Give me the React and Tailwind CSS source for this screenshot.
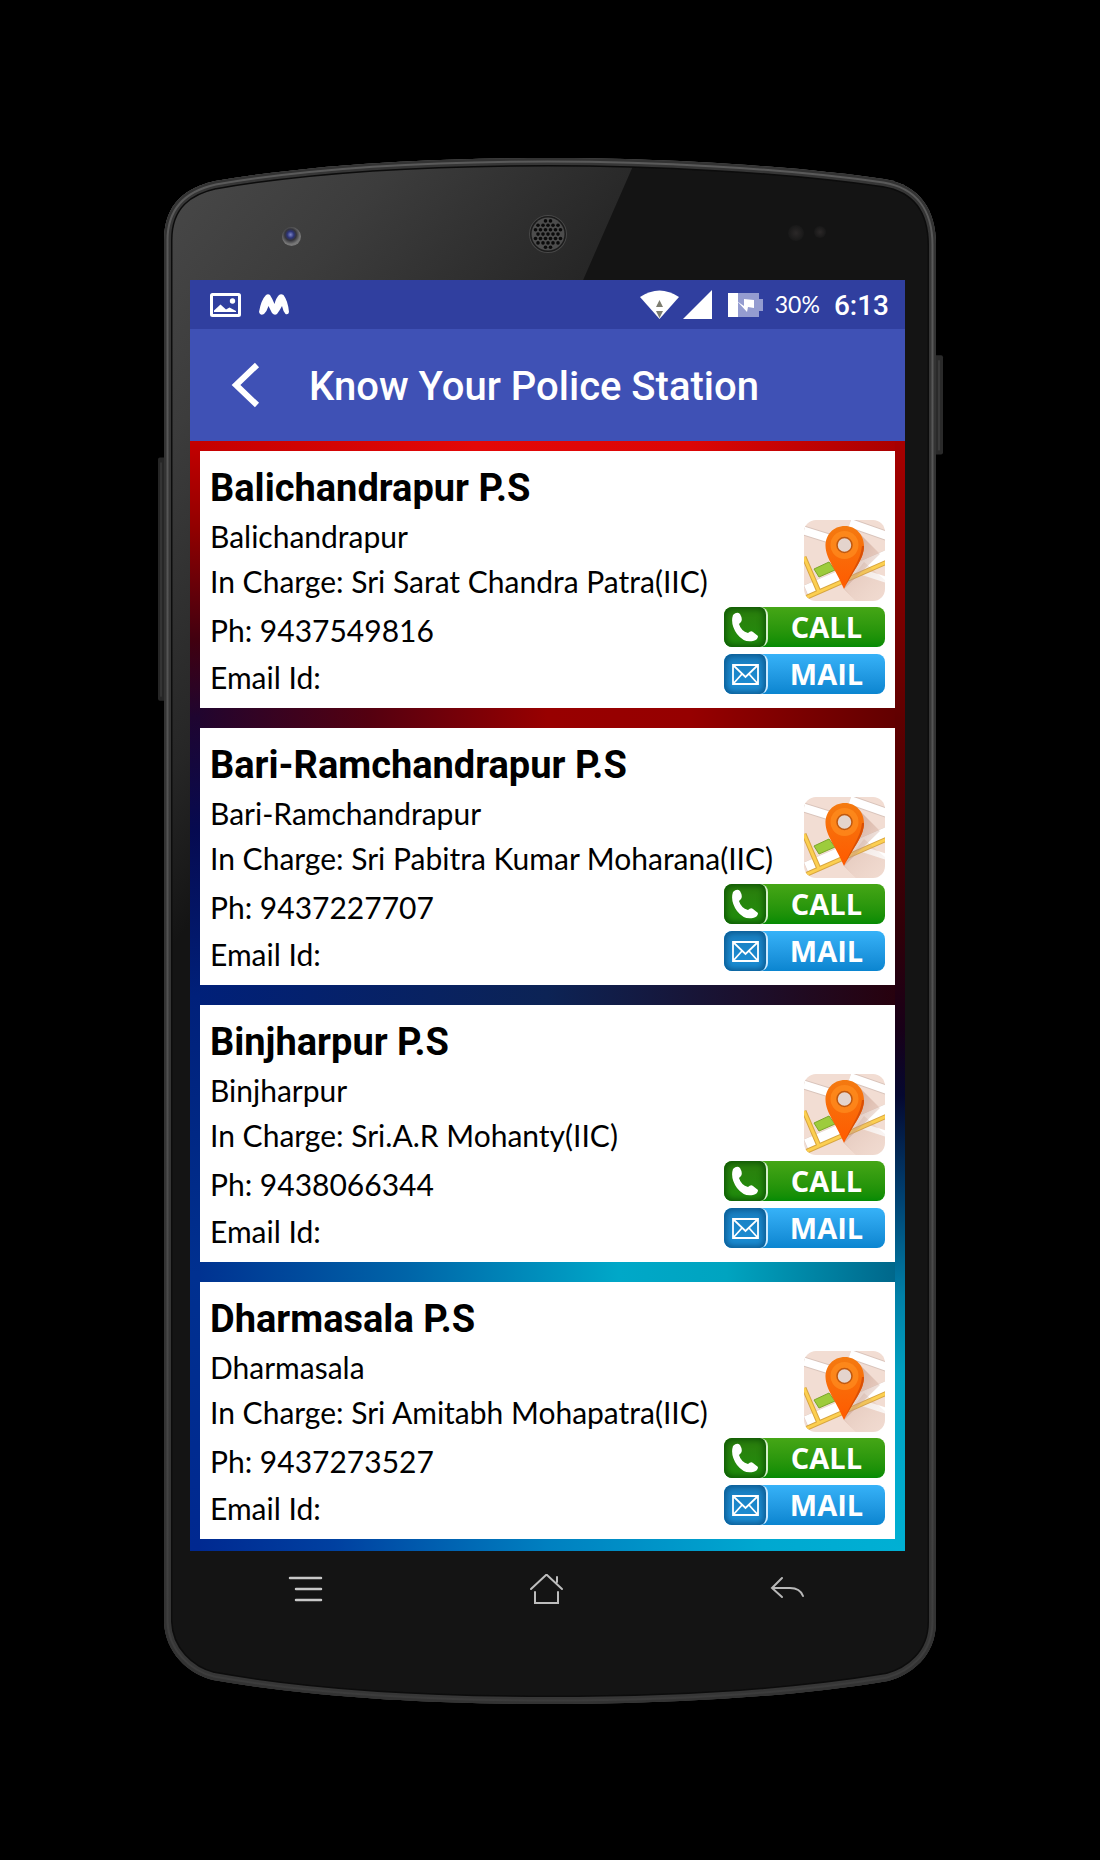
import React from "react";

const stations = [
  { name: "Balichandrapur P.S", place: "Balichandrapur", officer: "Sri Sarat Chandra Patra(IIC)", phone: "9437549816" },
  { name: "Bari-Ramchandrapur P.S", place: "Bari-Ramchandrapur", officer: "Sri Pabitra Kumar Moharana(IIC)", phone: "9437227707" },
  { name: "Binjharpur P.S", place: "Binjharpur", officer: "Sri.A.R Mohanty(IIC)", phone: "9438066344" },
  { name: "Dharmasala P.S", place: "Dharmasala", officer: "Sri Amitabh Mohapatra(IIC)", phone: "9437273527" },
];

const BODY =
  "M164 240C164 202 188 187 215 181C320 163 450 158 548 158C650 158 780 164 884 179C920 185 936 210 936 245V1620C936 1655 910 1673 888 1679C780 1697 650 1702 549 1702C450 1702 320 1697 213 1678C188 1672 165 1650 164 1620Z";

const holes = [];
for (let r = -3; r <= 3; r++) {
  for (let c = -3; c <= 3; c++) {
    const x = c * 5 + (r % 2 ? 2.5 : 0);
    const y = r * 4.4;
    if (x * x + y * y < 190) holes.push([x, y]);
  }
}

function PhoneBody() {
  return (
    <svg className="absolute inset-0 h-full w-full" viewBox="156 157 788 1546" preserveAspectRatio="none" aria-hidden="true">
      <defs>
        <clipPath id="body"><path d={BODY} /></clipPath>
        <linearGradient id="glare" gradientUnits="userSpaceOnUse" x1="200" y1="180" x2="560" y2="480">
          <stop offset="0" stopColor="#464646" />
          <stop offset="0.3" stopColor="#3c3c3c" />
          <stop offset="0.76" stopColor="#262626" />
          <stop offset="1" stopColor="#141414" />
        </linearGradient>
        <linearGradient id="rim" x1="0" y1="0" x2="0" y2="1">
          <stop offset="0" stopColor="#5a5a5a" />
          <stop offset="0.6" stopColor="#505050" />
          <stop offset="1" stopColor="#3c3c3c" />
        </linearGradient>
        <radialGradient id="lens" cx="0.45" cy="0.4">
          <stop offset="0" stopColor="#7d86c8" />
          <stop offset="0.35" stopColor="#2c3378" />
          <stop offset="0.6" stopColor="#34343a" />
          <stop offset="1" stopColor="#777" />
        </radialGradient>
        <radialGradient id="sensor">
          <stop offset="0" stopColor="#2b2828" />
          <stop offset="1" stopColor="#181818" />
        </radialGradient>
      </defs>
      <rect x="158" y="457" width="10" height="243" rx="2" fill="#262626" />
      <rect x="160" y="462" width="2" height="234" fill="#343434" />
      <rect x="932" y="355" width="11" height="99" rx="2" fill="#2a2a2a" />
      <rect x="938" y="360" width="2" height="90" fill="#3a3a3a" />
      <path d={BODY} fill="#141414" />
      <g clipPath="url(#body)">
        <path d="M156 150H640L583 280L190 1180L156 1240Z" fill="url(#glare)" />
        <path d={BODY} fill="none" stroke="#0c0c0c" strokeWidth="17" />
        <path d={BODY} fill="none" stroke="#363636" strokeWidth="14" />
        <path d={BODY} fill="none" stroke="url(#rim)" strokeWidth="9" />
        <path d={BODY} fill="none" stroke="#333" strokeWidth="5" />
      </g>
      <circle cx="291.500" cy="236.500" r="9.500" fill="url(#lens)" />
      <circle cx="548" cy="234" r="18.500" fill="#1b1b1b" stroke="#484848" strokeWidth="1" />
      <circle cx="548" cy="234" r="16.500" fill="#4c4c4c" />
      {holes.map(([x, y]) => (
        <circle key={x + "," + y} cx={548 + x} cy={234 + y} r="1.800" fill="#0a0a0a" />
      ))}
      <circle cx="796" cy="233" r="8" fill="url(#sensor)" />
      <circle cx="820" cy="232" r="6" fill="url(#sensor)" />
    </svg>
  );
}

function StatusBar() {
  return (
    <div className="flex h-[49px] items-center justify-between bg-[#303f9f] pr-4 pl-5 text-white">
      <div className="flex items-center gap-[18px]">
        <svg width="31" height="24" viewBox="0 0 31 24" aria-label="Picture notification">
          <rect x="1.500" y="1.500" width="28" height="21" rx="1" fill="none" stroke="#fff" strokeWidth="3" />
          <path d="M4 19V17.500L10.500 11.500L16 16.500L19.500 14.500L26 18V19Z" fill="#fff" />
          <circle cx="22.500" cy="8" r="2.700" fill="#fff" />
        </svg>
        <svg width="30" height="21" viewBox="0 0 30 21" aria-label="App notification">
          <path d="M0 18Q2 6 7 1Q9 -0.500 11 1Q13 4 15.500 10Q17 4 20 1Q22 -0.500 24.500 1Q29 7 30 18Q29.500 21 26.500 20Q24 17 23 12Q21 16 18 20Q15.500 22 13 19L9.500 12Q8 17 5 20Q1 22 0 18Z" fill="#fff" />
        </svg>
      </div>
      <div className="flex items-center">
        <svg width="39" height="29" viewBox="0 0 39 29" aria-label="Wi-Fi">
          <path d="M0 7Q19.500 -6 39 7L19.500 29Z" fill="#fff" />
          <path d="M16 17L19.500 10L23 17ZM16 21H23L19.500 28Z" fill="#7d7d70" />
        </svg>
        <svg className="ml-1" width="29" height="29" viewBox="0 0 29 29" aria-label="Signal">
          <path d="M0 29L29 0V29Z" fill="#fff" />
        </svg>
        <svg className="ml-4" width="35" height="24" viewBox="0 0 35 24" aria-label="Battery charging">
          <path d="M0 0H31V6H35V18H31V24H0Z" fill="#949cd0" />
          <path d="M0 0H10V24H0Z" fill="#fff" />
          <path d="M9 8L13 11L16 13L16 6L26 7V15L20 14L19 19Z" fill="#fff" />
        </svg>
        <span className="ml-3 font-['Lato'] text-[23px]">30%</span>
        <span className="ml-3.5 pt-0.5 font-['Roboto'] text-[28px] font-medium">6:13</span>
      </div>
    </div>
  );
}

function MapIcon() {
  return (
    <svg width="81" height="81" viewBox="0 0 81 81" aria-hidden="true">
      <defs>
        <clipPath id="tile"><rect width="81" height="81" rx="12" /></clipPath>
        <linearGradient id="pin" x1="0" y1="0" x2="0" y2="1">
          <stop offset="0" stopColor="#f47a10" />
          <stop offset="1" stopColor="#ff5a00" />
        </linearGradient>
        <linearGradient id="long" x1="0" y1="0" x2="1" y2="1">
          <stop offset="0" stopColor="#b98a78" stopOpacity="0.75" />
          <stop offset="1" stopColor="#d8b0a0" stopOpacity="0.1" />
        </linearGradient>
      </defs>
      <g clipPath="url(#tile)">
        <rect width="81" height="81" fill="#f2ddd3" />
        <path d="M-2 10L30 20M46 3L83 16" fill="none" stroke="#d9c4bb" strokeWidth="10" />
        <path d="M-2 10L30 20M46 3L83 16" fill="none" stroke="#fff" strokeWidth="8" />
        <path d="M2 71L83 36" stroke="#d8c6bd" strokeWidth="12" />
        <path d="M2 70L83 35" stroke="#fff" strokeWidth="10" />
        <path d="M58 52L83 60" stroke="#fff" strokeWidth="6" />
        <path d="M0 37L15 72M1 78L83 42" fill="none" stroke="#d8a640" strokeWidth="5" />
        <path d="M0 37L15 72M1 78L83 42" fill="none" stroke="#fccf50" strokeWidth="3" />
        <path d="M10 49L25 42L31 50L15 57Z" fill="#9dcc3c" stroke="#7ba62a" />
        <path d="M56 14L76 34L40 69L52 81L40 68Z" fill="url(#long)" />
        <path d="M40 68L60 42L81 60V81H52Z" fill="url(#long)" opacity="0.4" />
      </g>
      <path d="M41 6C29 6 21.500 15 21.500 26C22 39 31 48 40 69C50 49 60 39 60 26C60 15 52 6 41 6Z" fill="url(#pin)" />
      <path d="M60 26C60 39 50 49 40 69C46 53 57 40 58 26Z" fill="#d94f06" />
      <circle cx="40.500" cy="25" r="14" fill="#ff9022" opacity="0.65" />
      <circle cx="40.500" cy="25" r="7.500" fill="#e4d4cd" stroke="#c0580e" strokeWidth="1.500" />
    </svg>
  );
}

function StationCard({ station }) {
  return (
    <article className="bg-white px-2.5 pt-3.5 pb-[7px] text-black">
      <h2 className="font-['Roboto'] text-[38px] leading-[46px] font-bold">{station.name}</h2>
      <div className="mt-[3px] flex items-end justify-between font-['Lato'] text-[30px] leading-[45px] whitespace-nowrap">
        <div>
          <p>{station.place}</p>
          <p>In Charge: {station.officer}</p>
        </div>
        <button type="button" aria-label={"Map of " + station.place} className="mb-[3px]">
          <MapIcon />
        </button>
      </div>
      <div className="mt-[3px] flex items-start justify-between font-['Lato'] text-[30px] leading-[47px] whitespace-nowrap">
        <div>
          <p>Ph: {station.phone}</p>
          <p>Email Id:</p>
        </div>
        <div className="flex w-[161px] flex-col gap-[7px] font-['Open_Sans'] text-[29px] leading-10 font-bold text-white">
          <a href={"tel:" + station.phone} className="flex h-10 overflow-hidden rounded-lg bg-linear-to-b from-[#45a616] to-[#048b04]">
            <span className="flex w-11 items-center justify-center rounded-lg border-r-2 border-[#d4efcb] bg-linear-to-b from-[#2b7d0d] to-[#1f8f0c] shadow-[inset_0_0_6px_2px_#0d5305]">
              <svg width="28" height="30" viewBox="0 0 28 30" aria-hidden="true">
                <path d="M2 3Q6 -1 9 2Q12 7 10 10L8 12Q10 19 17 21Q20 18 22 20L27 24Q27 28 22 29Q13 31 6 22Q-1 12 2 3Z" fill="#fff" />
              </svg>
            </span>
            <span className="flex-1 text-center">CALL</span>
          </a>
          <a href="mailto:" className="flex h-10 overflow-hidden rounded-lg bg-linear-to-b from-[#36b2f8] to-[#0a85d0]">
            <span className="flex w-11 items-center justify-center rounded-lg border-r-2 border-[#cdeaff] bg-linear-to-b from-[#1a7fc0] to-[#1c8fd6] shadow-[inset_0_0_6px_2px_#0a568c]">
              <svg width="27" height="21" viewBox="0 0 27 21" fill="none" stroke="#fff" strokeWidth="1.800" aria-hidden="true">
                <path d="M1 1H26V20H1ZM1 1L13.500 13L26 1M1 20L10 10M26 20L17 10" />
              </svg>
            </span>
            <span className="flex-1 text-center">MAIL</span>
          </a>
        </div>
      </div>
    </article>
  );
}

export default function App() {
  return (
    <main className="flex min-h-screen justify-center bg-black py-[157px]">
      <div className="relative w-full max-w-[788px] pt-[123px] pb-[100px]">
        <PhoneBody />
        <div className="relative mr-[39px] ml-[34px]">
          <StatusBar />
          <header className="flex h-[112px] items-center bg-[#3f51b5] pl-[41px] text-white">
            <button type="button" aria-label="Back">
              <svg width="30" height="46" viewBox="0 0 30 46" fill="none" stroke="#fff" strokeWidth="6" aria-hidden="true">
                <path d="M26 3L5 23L26 43" />
              </svg>
            </button>
            <h1 className="ml-12 pt-1 font-['Roboto'] text-[40px] font-medium whitespace-nowrap">Know Your Police Station</h1>
          </header>
          <section className="bg-[linear-gradient(90deg,#c40000_0%,#e40808_40%,#dc0606_70%,#a80000_100%),linear-gradient(90deg,#1e0530_0%,#540010_25%,#980000_50%,#960000_70%,#600000_100%),linear-gradient(90deg,#00207a_0%,#0c2355_50%,#28000c_100%),linear-gradient(90deg,#003090_0%,#0064a8_30%,#00a8c8_60%,#00a4c0_75%,#006488_100%),linear-gradient(90deg,#002890_0%,#0040a0_20%,#0080c0_50%,#00a8d0_80%,#00b0d4_100%)] bg-[length:100%_4%] bg-[position:0_0,0_25%,0_50%,0_75%,0_100%] bg-no-repeat">
            <div className="flex flex-col gap-5 bg-[linear-gradient(180deg,#c40000_0%,#900000_8%,#400010_18%,#1e0530_25%,#060a50_35%,#00207a_50%,#003090_75%,#002890_100%),linear-gradient(180deg,#a80000_0%,#600000_25%,#300008_44%,#180018_53%,#050830_59%,#004070_68%,#0080a8_77%,#00a0c0_84%,#00b0d4_100%)] bg-[length:10px_100%,10px_100%] bg-[position:left,right] bg-no-repeat px-2.5 pt-2.5 pb-3">
              {stations.map((s) => (
                <StationCard key={s.name} station={s} />
              ))}
            </div>
          </section>
          <nav aria-label="System" className="flex items-start justify-between pt-[22px] pr-[100px] pl-[98px]">
            <button type="button" aria-label="Menu">
              <svg width="35" height="30" viewBox="0 0 35 30" stroke="#c8c8c8" strokeWidth="2.500" strokeLinecap="round" aria-hidden="true">
                <path d="M2 5H33M8 16H33M8 27H33" />
              </svg>
            </button>
            <button type="button" aria-label="Home">
              <svg width="35" height="32" viewBox="0 0 35 32" fill="none" stroke="#bdbdbd" strokeWidth="2" strokeLinecap="round" aria-hidden="true">
                <path d="M2 16L17 2H18L33 16M6 19V30H29V19M28 4V9" />
              </svg>
            </button>
            <button type="button" aria-label="Go back">
              <svg width="35" height="30" viewBox="0 0 35 30" fill="none" stroke="#b8b8b8" strokeWidth="2" strokeLinecap="round" aria-hidden="true">
                <path d="M12 5L2 15L12 24M2 15H20Q30 15 33 23" />
              </svg>
            </button>
          </nav>
        </div>
      </div>
    </main>
  );
}
